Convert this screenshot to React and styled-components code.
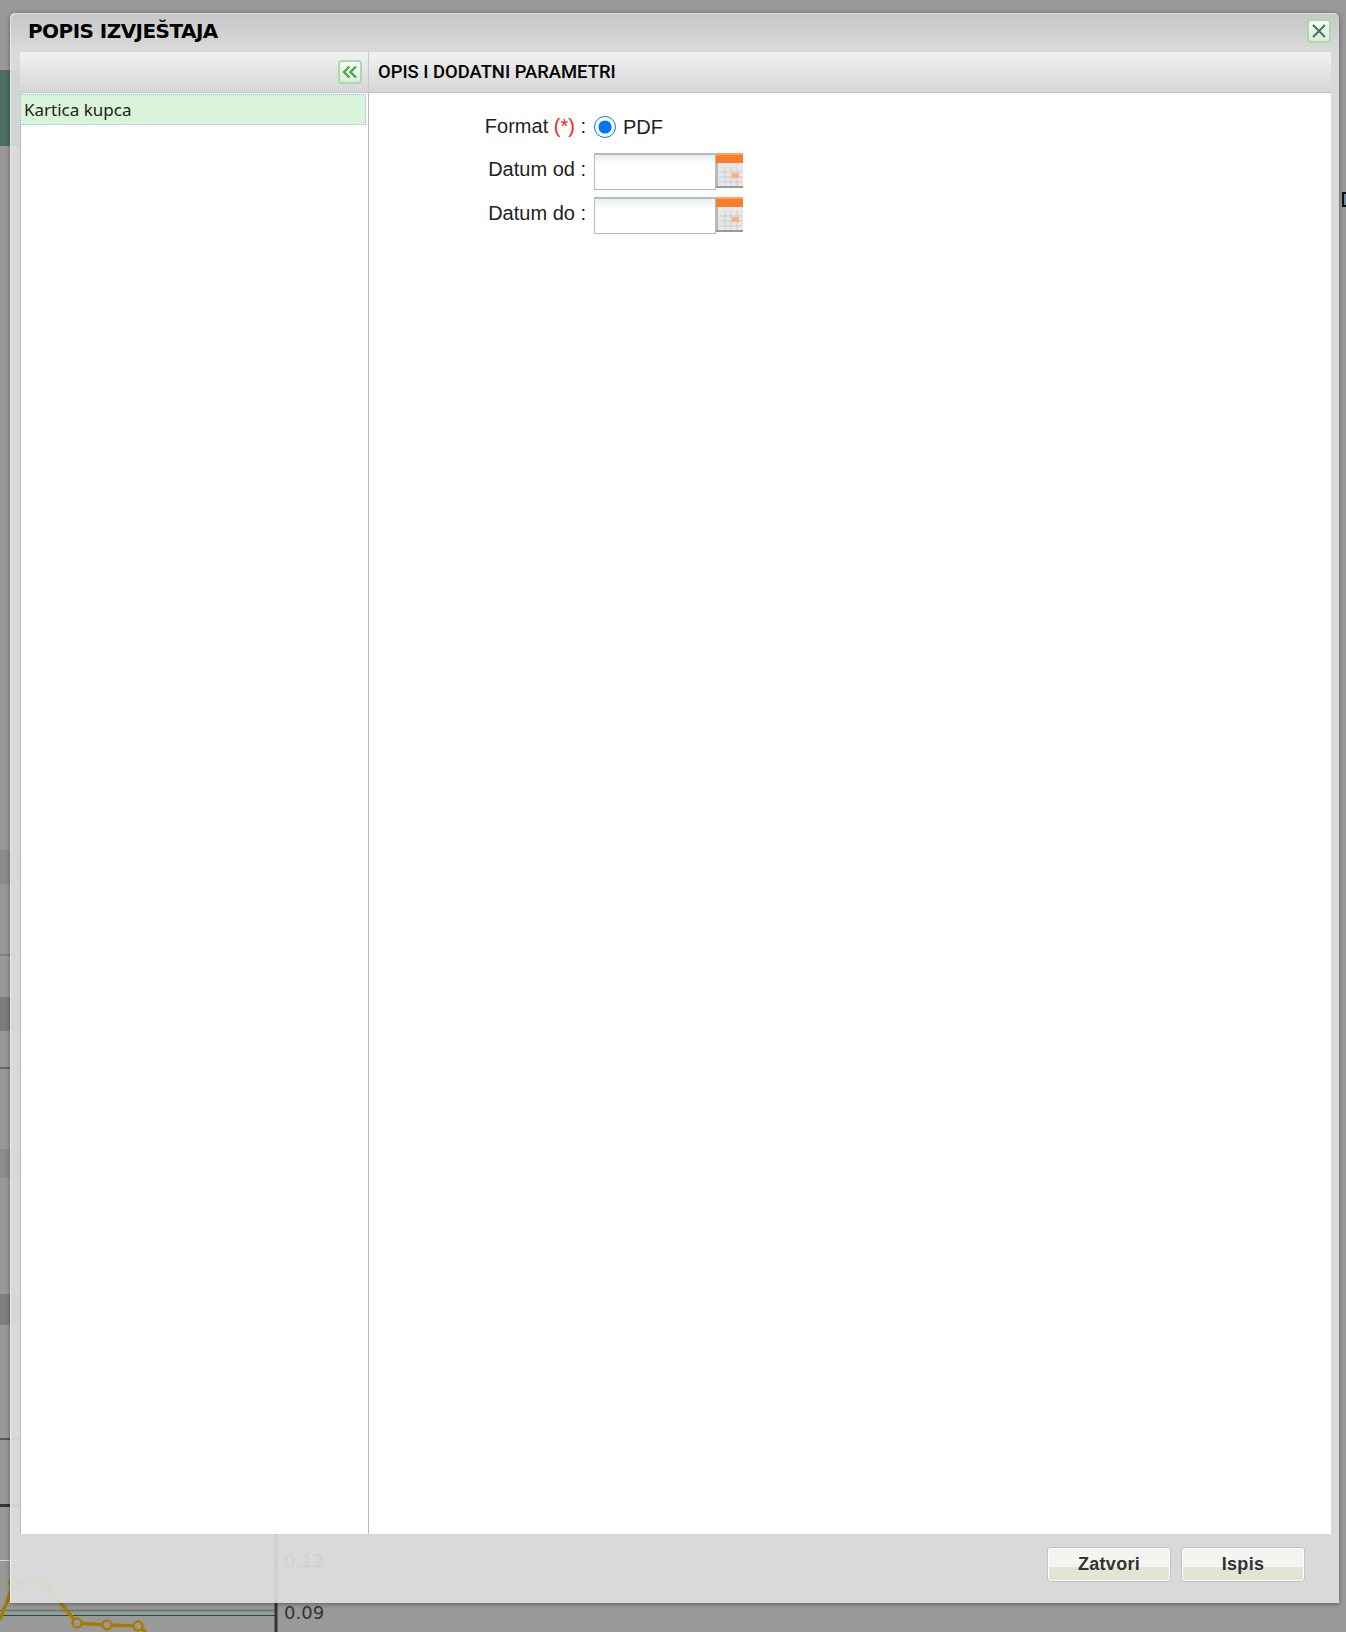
import React from 'react'
import styled, { createGlobalStyle } from 'styled-components'

const GlobalStyle = createGlobalStyle`
  html, body {
    margin: 0;
    padding: 0;
    background: #999;
  }
`

const Page = styled.div`
  position: relative;
  width: 1346px;
  height: 1632px;
  overflow: hidden;
  background: #999;
  font-family: "Liberation Sans", Arial, sans-serif;
`

const Band = styled.div`
  position: absolute;
  left: 0;
  width: 40px;
  top: ${p => p.$top}px;
  height: ${p => p.$h}px;
  background: ${p => p.$bg};
`

const EdgeBox = styled.div`
  position: absolute;
  left: 1342px;
  top: 192px;
  width: 10px;
  height: 15px;
  box-sizing: border-box;
  border: 2px solid #111;
  background: #6d8ba0;
`

const AxisLabel = styled.span`
  position: absolute;
  left: 284px;
  top: ${p => p.$top}px;
  font: 18px "DejaVu Sans", sans-serif;
  color: #333;
`

const Dialog = styled.div`
  position: absolute;
  left: 10px;
  top: 13px;
  width: 1329px;
  height: 1590px;
  display: flex;
  flex-direction: column;
  box-sizing: border-box;
  padding: 0 8px 0 10px;
  border-radius: 5px 5px 0 0;
  background: linear-gradient(rgba(204, 204, 204, 0.9), rgba(224, 224, 224, 0.9) 36px);
  box-shadow: 0 1px 5px rgba(0, 0, 0, 0.4), inset 1px 1px 0 rgba(255, 255, 255, 0.45);
`

const TitleBar = styled.div`
  height: 39px;
  flex: none;
  display: flex;
  align-items: center;
  justify-content: space-between;
  padding: 0 0 3px 8px;
  box-sizing: border-box;
`

const Title = styled.h1`
  margin: 0;
  font: bold 20px "DejaVu Sans", Verdana, sans-serif;
  letter-spacing: -0.55px;
  color: #000;
`

const IconButton = styled.button`
  width: 24px;
  height: 24px;
  padding: 0;
  display: flex;
  align-items: center;
  justify-content: center;
  border: 2px solid #aadaaa;
  border-radius: 4px;
  background: linear-gradient(#f8faf8, #dcebdc);
`

const Panels = styled.div`
  flex: 1;
  min-height: 0;
  display: grid;
  grid-template-columns: 349px 1fr;
`

const Sidebar = styled.aside`
  display: flex;
  flex-direction: column;
  background: #fff;
  border-left: 1px solid #b6bccf;
  border-right: 1px solid #b6bccf;
  box-sizing: border-box;
`

const PanelHeader = styled.div`
  height: 41px;
  flex: none;
  box-sizing: border-box;
  display: flex;
  align-items: center;
  justify-content: ${p => (p.$end ? 'flex-end' : 'flex-start')};
  padding: ${p => (p.$end ? '0 6px 0 0' : '0 0 2px 9px')};
  background: linear-gradient(#f2f2f2, #d6d6d6);
  border-bottom: 1px solid #c4c4c4;
  border-right: ${p => (p.$end ? '1px solid #c8c8c8' : 'none')};
  margin: ${p => (p.$end ? '0 -1px 0 -1px' : '0')};
  font: 500 18.4px Roboto, "Liberation Sans", sans-serif;
  color: #000;
`

const ReportItem = styled.div`
  height: 31px;
  margin: 1px 2px 0 -1px;
  padding-left: 3px;
  box-sizing: border-box;
  display: flex;
  align-items: center;
  background: #daf4da;
  border: 1px dotted #94b8f0;
  font: 17px "Noto Sans", Tahoma, sans-serif;
  color: #222;
`

const Main = styled.main`
  display: flex;
  flex-direction: column;
  background: #fff;
`

const Form = styled.div`
  display: grid;
  grid-template-columns: 217px auto;
  justify-content: start;
  column-gap: 7px;
  row-gap: 7px;
  padding-top: 20px;
  align-items: center;
  font-size: 20px;
  color: #222;
`

const Label = styled.label`
  text-align: right;
  white-space: nowrap;
  margin-top: ${p => (p.$up ? '-6px' : '-4px')};
`

const Required = styled.span`
  color: #f22;
`

const RadioLine = styled.div`
  height: 27px;
  display: flex;
  align-items: center;
  gap: 7px;
  margin: 0 0 6px 1px;
`

const PdfText = styled.span`
  margin-top: 2px;
`

const Radio = styled.input`
  width: 22px;
  height: 22px;
  margin: 0;
`

const DateField = styled.div`
  display: flex;
  align-items: flex-start;
  margin-left: 1px;
`

const DateInput = styled.input`
  width: 122px;
  height: 37px;
  box-sizing: border-box;
  padding: 2px 4px;
  border: 1px solid #b3b9cf;
  border-top-width: 2px;
  background: linear-gradient(#eceeee, #fff 10px);
  outline: none;
`

const Footer = styled.div`
  height: 69px;
  flex: none;
  display: flex;
  justify-content: flex-end;
  gap: 10px;
  padding: 13px 26px 0 0;
  box-sizing: border-box;
`

const Button = styled.button`
  width: 124px;
  height: 35px;
  padding: 0;
  border: 1px solid #c2c2c2;
  border-radius: 4px;
  outline: 1px solid #fff;
  outline-offset: -2px;
  background: linear-gradient(#f3f5f0 58%, #e0e5d6 58%);
  font: bold 18px "Liberation Sans", Arial, sans-serif;
  color: #333;
  letter-spacing: 0.3px;
`

const CloseIcon = () => (
  <svg width="16" height="16" viewBox="0 0 16 16">
    <path d="M2 2 L14 14 M14 2 L2 14" stroke="#3f7a55" strokeWidth="2" fill="none" />
  </svg>
)

const CollapseIcon = () => (
  <svg width="16" height="14" viewBox="0 0 16 14">
    <path d="M7.5 1.5 L2 7 L7.5 12.5 M14 1.5 L8.5 7 L14 12.5" stroke="#4aa84a" strokeWidth="2.4" fill="none" />
  </svg>
)

const CalendarIcon = () => (
  <svg width="27" height="35" viewBox="0 0 27 35">
    <rect x="0" y="0" width="27" height="10" fill="#fb7d2b" />
    <rect x="0" y="0" width="27" height="2" fill="#ffa260" />
    <rect x="0" y="10" width="27" height="25" fill="#e8e8e8" />
    <rect x="0" y="10" width="2" height="25" fill="#b8b8b8" />
    <rect x="0" y="33" width="27" height="2" fill="#9a9a9a" />
    <path d="M3 19h24M3 24h24M3 29h24M9 14v19M15 14v19M21 14v19" stroke="#cccccc" strokeWidth="1" />
    <rect x="16" y="20" width="7" height="5" fill="#fdb27c" />
  </svg>
)

const Backdrop = () => (
  <>
    <Band $top={70} $h={76} $bg="#4d6e64" />
    <Band $top={850} $h={34} $bg="#8c8c8c" />
    <Band $top={954} $h={2} $bg="#808080" />
    <Band $top={997} $h={34} $bg="#7c7c7c" />
    <Band $top={1067} $h={2} $bg="#666" />
    <Band $top={1149} $h={29} $bg="#8d8d8d" />
    <Band $top={1294} $h={31} $bg="#7f7f7f" />
    <Band $top={1438} $h={2} $bg="#555" />
    <Band $top={1504} $h={3} $bg="#333" />
    <EdgeBox />
    <svg width="346" height="132" viewBox="0 1500 346 132" style={{ position: 'absolute', left: 0, top: 1500 }}>
      <path d="M0 1560.5H275" stroke="#d8d8d8" />
      <path d="M0 1610.5H275" stroke="#757575" strokeWidth="2" />
      <path d="M0 1615.5H275" stroke="#16553a" />
      <path d="M276 1500V1632" stroke="#333" strokeWidth="3" />
      <path d="M347 1500V1632" stroke="#666" strokeWidth="1.5" />
      <path d="M0 1620 L14 1583 L45 1584 L77 1623 L107 1625 L138 1626 L146 1632" stroke="#a67c00" strokeWidth="3.5" fill="none" />
      {[[14, 1583], [45, 1584], [77, 1623], [107, 1625], [138, 1626]].map(([x, y]) => (
        <circle key={x} cx={x} cy={y} r="4.5" fill="#999" stroke="#a67c00" strokeWidth="2.5" />
      ))}
    </svg>
    <AxisLabel $top={1550}>0.12</AxisLabel>
    <AxisLabel $top={1602}>0.09</AxisLabel>
  </>
)

const App = () => (
  <Page>
    <GlobalStyle />
    <Backdrop />
    <Dialog>
      <TitleBar>
        <Title>POPIS IZVJEŠTAJA</Title>
        <IconButton aria-label="close"><CloseIcon /></IconButton>
      </TitleBar>
      <Panels>
        <Sidebar>
          <PanelHeader $end>
            <IconButton aria-label="collapse"><CollapseIcon /></IconButton>
          </PanelHeader>
          <ReportItem>Kartica kupca</ReportItem>
        </Sidebar>
        <Main>
          <PanelHeader>OPIS I DODATNI PARAMETRI</PanelHeader>
          <Form>
            <Label $up>Format <Required>(*)</Required> :</Label>
            <RadioLine>
              <Radio type="radio" name="format" defaultChecked />
              <PdfText>PDF</PdfText>
            </RadioLine>
            <Label>Datum od :</Label>
            <DateField><DateInput /><CalendarIcon /></DateField>
            <Label>Datum do :</Label>
            <DateField><DateInput /><CalendarIcon /></DateField>
          </Form>
        </Main>
      </Panels>
      <Footer>
        <Button>Zatvori</Button>
        <Button>Ispis</Button>
      </Footer>
    </Dialog>
  </Page>
)

export default App
